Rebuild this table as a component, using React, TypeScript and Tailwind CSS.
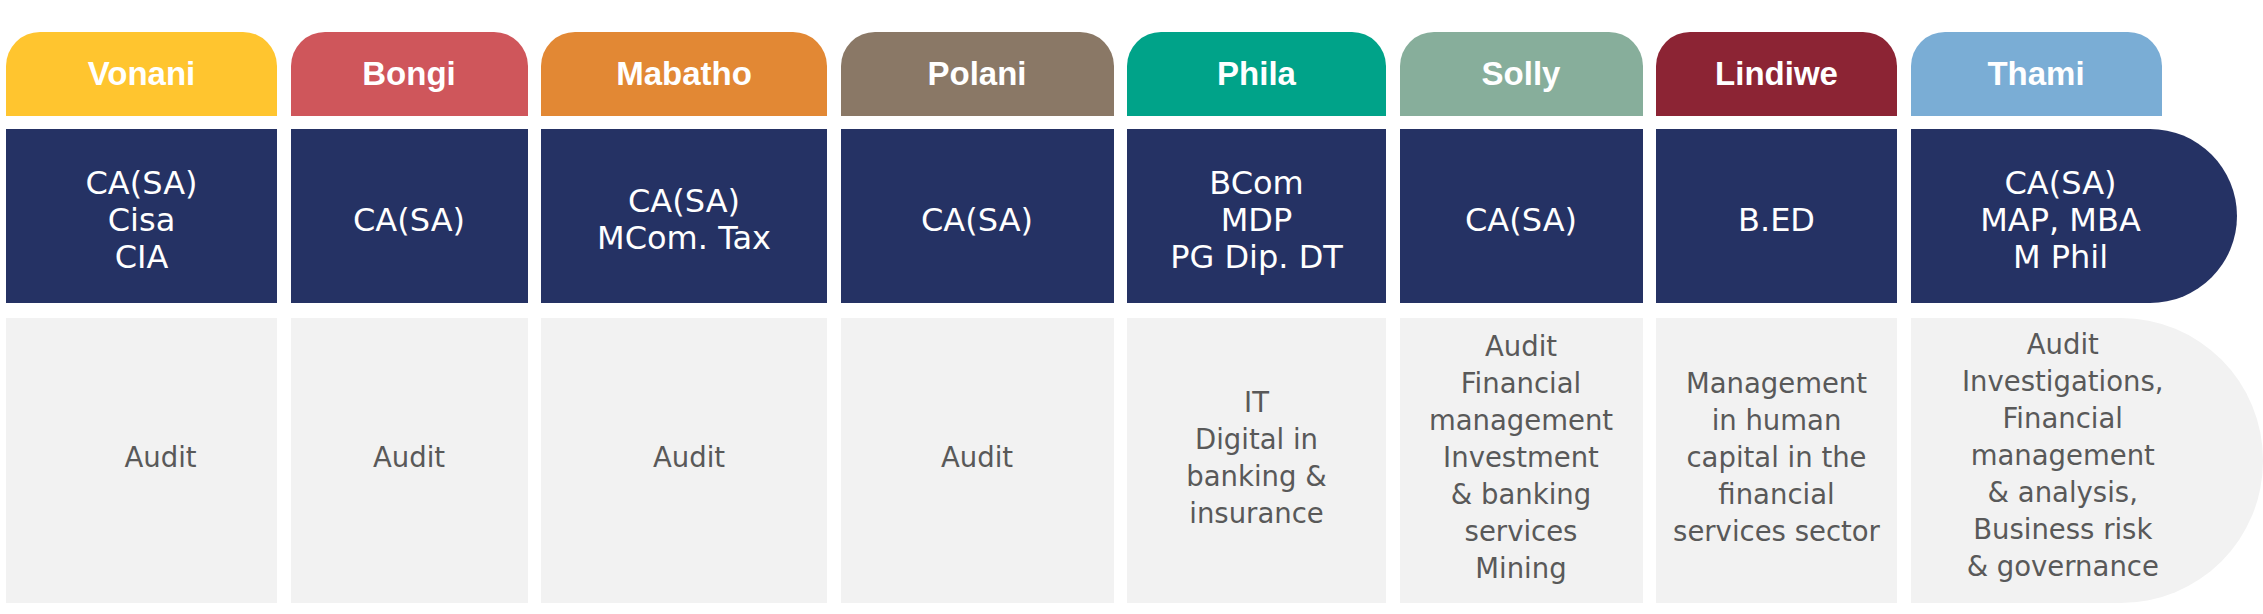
const people = [
  {
    name: "Vonani",
    head: "bg-[#ffc52f]",
    width: "w-[271px]",
    quals: ["CA(SA)", "Cisa", "CIA"],
    areas: ["Audit"],
    areaPad: "pl-[38px]",
  },
  {
    name: "Bongi",
    head: "bg-[#cf565b]",
    width: "w-[237px]",
    quals: ["CA(SA)"],
    areas: ["Audit"],
    areaPad: "",
  },
  {
    name: "Mabatho",
    head: "bg-[#e28834]",
    width: "w-[286px]",
    quals: ["CA(SA)", "MCom. Tax"],
    areas: ["Audit"],
    areaPad: "pl-[10px]",
  },
  {
    name: "Polani",
    head: "bg-[#8a7866]",
    width: "w-[273px]",
    quals: ["CA(SA)"],
    areas: ["Audit"],
    areaPad: "",
  },
  {
    name: "Phila",
    head: "bg-[#00a389]",
    width: "w-[259px]",
    quals: ["BCom", "MDP", "PG Dip. DT"],
    areas: ["IT", "Digital in", "banking &", "insurance"],
    areaPad: "pb-[6px]",
  },
  {
    name: "Solly",
    head: "bg-[#87ae9b]",
    width: "w-[243px]",
    quals: ["CA(SA)"],
    areas: ["Audit", "Financial", "management", "Investment", "& banking", "services", "Mining"],
    areaPad: "pb-[6px]",
  },
  {
    name: "Lindiwe",
    head: "bg-[#8c2434]",
    width: "w-[241px]",
    quals: ["B.ED"],
    areas: ["Management", "in human", "capital in the", "financial", "services sector"],
    areaPad: "",
  },
];

const font = "font-['DejaVu_Sans',sans-serif]";
const tabFont = "font-['Liberation_Sans',Arial,sans-serif] font-bold text-[33px]";

function Lines({ items }: { items: string[] }) {
  return (
    <>
      {items.map((line) => (
        <span key={line} className="block whitespace-nowrap">
          {line}
        </span>
      ))}
    </>
  );
}

export default function App() {
  return (
    <div className={`w-[2263px] h-[614px] bg-white overflow-hidden pt-[32px] pl-[6px] flex gap-[13.5px] ${font}`}>
      {people.map((p) => (
        <div key={p.name} className={`${p.width} shrink-0 flex flex-col`}>
          {/* name tab */}
          <div className={`${p.head} h-[84px] rounded-t-[34px] flex items-center justify-center text-white ${tabFont}`}>
            {p.name}
          </div>
          {/* qualifications */}
          <div className="mt-[13px] h-[174px] bg-[#253264] text-white text-[32px] leading-[37px] flex flex-col items-center justify-center text-center pt-[8px]">
            <Lines items={p.quals} />
          </div>
          {/* focus areas */}
          <div
            className={`mt-[15px] h-[285px] bg-[#f2f2f2] text-[#595959] text-[27.5px] leading-[37px] flex flex-col items-center justify-center text-center pb-[6px] ${p.areaPad}`}
          >
            <Lines items={p.areas} />
          </div>
        </div>
      ))}

      {/* last column with rounded ends */}
      <div className="flex-1 flex flex-col">
        <div className={`w-[251px] h-[84px] bg-[#7aadd5] rounded-t-[34px] flex items-center justify-center text-white ${tabFont}`}>
          Thami
        </div>
        <div className="mt-[13px] w-[326px] h-[174px] bg-[#253264] rounded-r-[87px] text-white text-[32px] leading-[37px] flex flex-col items-center justify-center text-center pt-[8px] pr-[26px]">
          <Lines items={["CA(SA)", "MAP, MBA", "M Phil"]} />
        </div>
        <div className="mt-[15px] h-[285px] bg-[#f2f2f2] rounded-r-[142px] text-[#595959] text-[27.5px] leading-[37px] flex flex-col items-center justify-center text-center pr-[48px] pb-[10px]">
          <Lines
            items={[
              "Audit",
              "Investigations,",
              "Financial",
              "management",
              "& analysis,",
              "Business risk",
              "& governance",
            ]}
          />
        </div>
      </div>
    </div>
  );
}
